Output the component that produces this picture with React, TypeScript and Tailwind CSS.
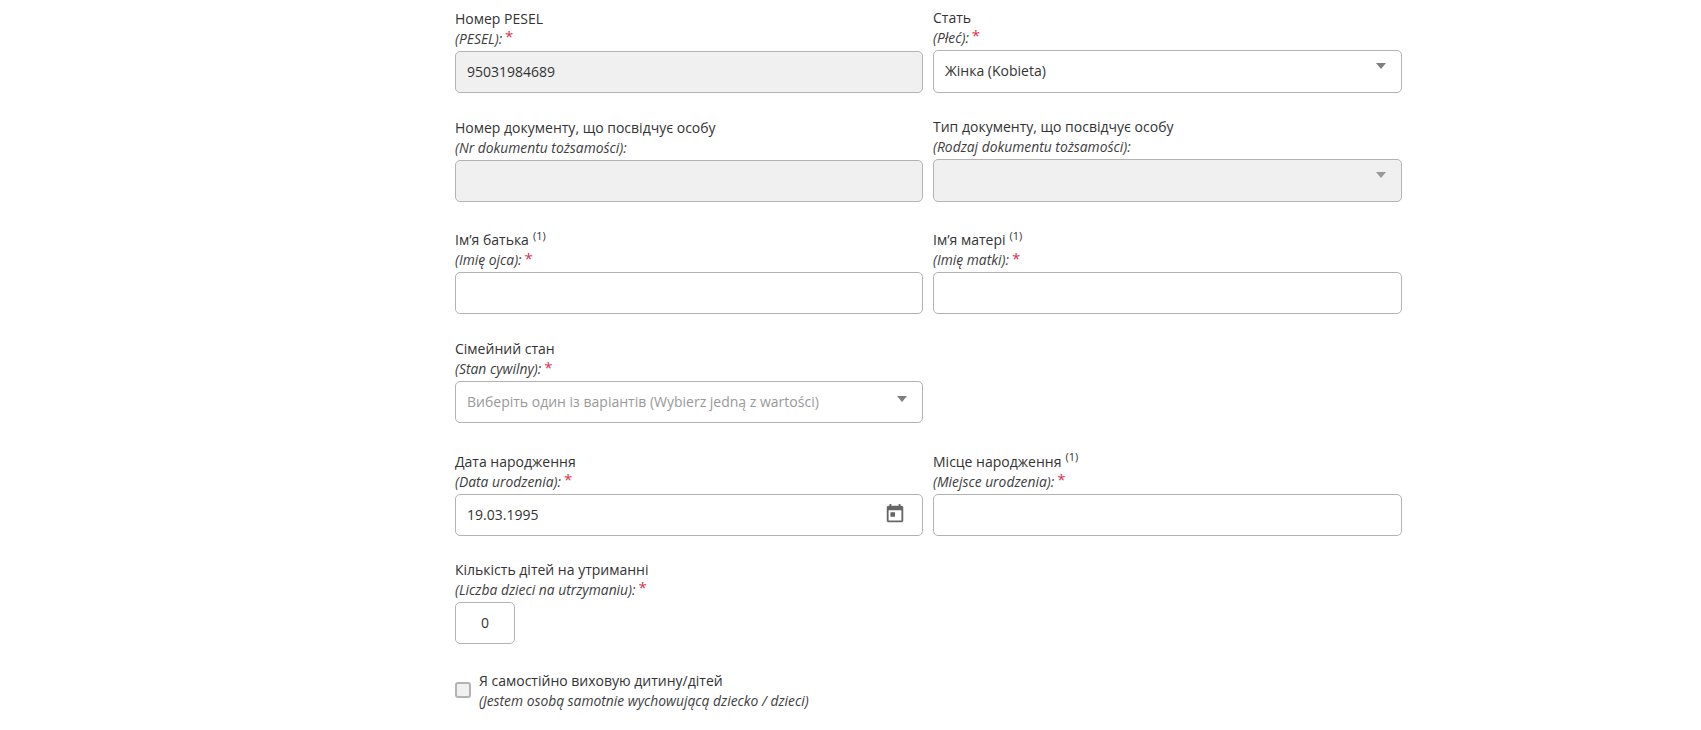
import React from "react";

const inputBase = "mt-[2px] flex h-[42px] w-full items-center rounded-[5px] border border-[#b3b3b3] pb-[1px] px-[11px] text-[14px] text-[#333]";
const selectBase = "mt-[2px] flex h-[43px] w-full items-center rounded-[5px] border border-[#b3b3b3] pb-[1px] px-[11px] text-[14px] text-[#333]";

function Caret({ muted, low }: { muted?: boolean; low?: boolean }) {
  return (
    <span
      className={
        "ml-auto mr-[4px] h-0 w-0 border-x-[5.5px] border-t-[6px] border-x-transparent " +
        (low ? "mb-[6px] " : "mb-[10px] ") +
        (muted ? "border-t-[#999]" : "border-t-[#7f7f7f]")
      }
    />
  );
}

function Field({
  label,
  sub,
  note,
  required,
  children,
}: {
  label: string;
  sub: string;
  note?: boolean;
  required?: boolean;
  children: React.ReactNode;
}) {
  return (
    <div className="flex flex-col">
      <div className={"text-[14px] leading-[20px] text-[#333] " + (note ? "h-[26.6px] pt-[5.6px]" : "h-[22px] pt-[1px]")}>
        {label}
        {note && <sup className="ml-[4px] text-[11px] leading-none">(1)</sup>}
      </div>
      <div className="-mt-[1px] flex h-[20px] items-center text-[13.85px] italic leading-[20px] text-[#3d3d3d]">
        {sub}
        {required && <span className="ml-[3px] -translate-y-[2px] text-[15px] not-italic leading-none text-[#dc2f52]">*</span>}
      </div>
      {children}
    </div>
  );
}

function CalendarIcon() {
  return (
    <svg viewBox="0 0 24 24" className="ml-auto mb-[1px] mr-[5px] h-[22px] w-[22px] fill-[#666]">
      <path d="M19 3h-1V1h-2v2H8V1H6v2H5c-1.11 0-1.99.9-1.99 2L3 19c0 1.1.89 2 2 2h14c1.1 0 2-.9 2-2V5c0-1.1-.9-2-2-2zm0 16H5V8h14v11zM7 10h5v5H7z" />
    </svg>
  );
}

export default function App() {
  return (
    <div className="h-[730px] w-full overflow-hidden bg-white font-['Open_Sans',sans-serif]">
      <div className="ml-[455px] grid w-[947px] grid-cols-[468px_469px] items-end gap-x-[10px] gap-y-[23px] pt-[6.7px]">
        <Field label="Номер PESEL" sub="(PESEL):" required>
          <div className={inputBase + " bg-[#f0f0f0]"}>95031984689</div>
        </Field>
        <Field label="Стать" sub="(Płeć):" required>
          <div className={selectBase + " bg-white"}>
            Жінка (Kobieta)
            <Caret />
          </div>
        </Field>

        <Field label="Номер документу, що посвідчує особу" sub="(Nr dokumentu tożsamości):">
          <div className={inputBase + " bg-[#f0f0f0]"} />
        </Field>
        <Field label="Тип документу, що посвідчує особу" sub="(Rodzaj dokumentu tożsamości):">
          <div className={selectBase + " bg-[#f0f0f0]"}>
            <Caret muted />
          </div>
        </Field>

        <Field label="Ім’я батька" sub="(Imię ojca):" note required>
          <div className={inputBase + " bg-white"} />
        </Field>
        <Field label="Ім’я матері" sub="(Imię matki):" note required>
          <div className={inputBase + " bg-white"} />
        </Field>

        <div className="col-span-2 w-[468px] pt-[1px]">
          <Field label="Сімейний стан" sub="(Stan cywilny):" required>
            <div className={inputBase + " bg-white !text-[#999]"}>
              Виберіть один із варіантів (Wybierz jedną z wartości)
              <Caret low />
            </div>
          </Field>
        </div>

        <Field label="Дата народження" sub="(Data urodzenia):" required>
          <div className={inputBase + " bg-white"}>
            19.03.1995
            <CalendarIcon />
          </div>
        </Field>
        <Field label="Місце народження" sub="(Miejsce urodzenia):" note required>
          <div className={inputBase + " bg-white"} />
        </Field>

        <div className="col-span-2">
          <Field label="Кількість дітей на утриманні" sub="(Liczba dzieci na utrzymaniu):" required>
            <div className={inputBase + " !w-[60px] bg-white"}>
              <span className="w-full text-center">0</span>
            </div>
          </Field>
        </div>

        <label className="col-span-2 flex items-start gap-[8px] pt-[4px]">
          <span className="mt-[11px] h-[16px] w-[16px] rounded-[3px] border-2 border-[#b3b3b3] bg-[#f0f0f0]" />
          <span className="flex flex-col">
            <span className="h-[21px] text-[14px] leading-[20px] text-[#333]">Я самостійно виховую дитину/дітей</span>
            <span className="-mt-[1px] text-[13.85px] italic leading-[20px] text-[#3d3d3d]">(Jestem osobą samotnie wychowującą dziecko / dzieci)</span>
          </span>
        </label>
      </div>
    </div>
  );
}
